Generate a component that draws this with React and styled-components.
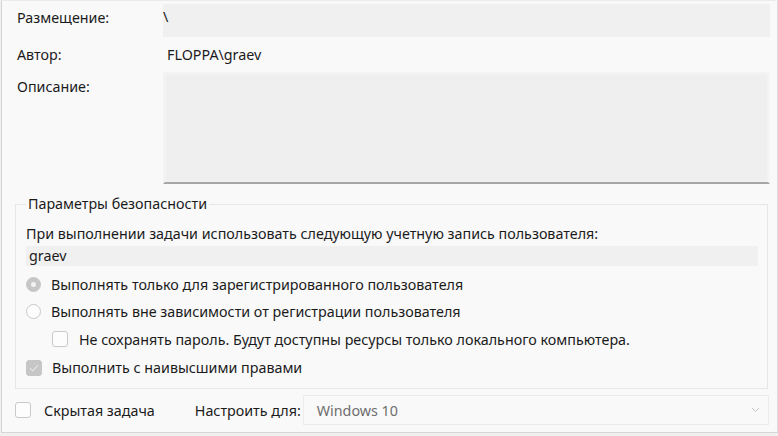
import React from 'react';
import styled, { createGlobalStyle } from 'styled-components';

const GlobalStyle = createGlobalStyle`
  html, body {
    margin: 0;
    padding: 0;
    background: #f0f0f0;
  }
  body {
    font-family: "Noto Sans", "Open Sans", sans-serif;
    font-size: 14.3px;
    color: #1b1b1b;
  }
`;

const Frame = styled.div`
  box-sizing: border-box;
  width: 777px;
  height: 433px;
  margin-left: 1px;
  background: #f9f9f9;
  border-left: 1px solid #d4d4d4;
  border-right: 1px solid #dcdcdc;
  border-bottom: 1px solid #d6d6d6;
  border-top: 1px solid #ececec;
  display: flex;
  flex-direction: column;
`;

const InfoGrid = styled.div`
  display: grid;
  grid-template-columns: 146px 1fr;
  padding: 3px 7px 0 15px;
`;

const Label = styled.div`
  height: ${(p) => p.$h}px;
  padding-top: ${(p) => p.$pt || 0}px;
  box-sizing: border-box;
  display: flex;
  align-items: ${(p) => (p.$center ? 'center' : 'flex-start')};
  white-space: nowrap;
`;

const ReadField = styled.div`
  box-sizing: border-box;
  height: ${(p) => p.$h}px;
  background: #f0f0f0;
  padding: 4px 0 0 0;
  line-height: 18px;
`;

const PlainValue = styled.div`
  height: 35px;
  display: flex;
  align-items: center;
  padding-left: 4px;
`;

const TextArea = styled.div`
  box-sizing: border-box;
  height: 112px;
  background: #efefef;
  border: 2px solid #f3f3f3;
  border-bottom: 2px solid #a6a6a6;
  border-right: 2px solid #f5f5f5;
  box-shadow: inset 0 0 0 1px #f2f2f2;
`;

const Group = styled.fieldset`
  margin: 11px 9px 0 13px;
  padding: 0 9px 0 10px;
  border: 1px solid #e6e6e6;
  height: 194px;
  box-sizing: border-box;
  min-width: 0;
`;

const Legend = styled.legend`
  padding: 0 2px;
  margin-left: 0;
  line-height: 18px;
`;

const Prompt = styled.div`
  height: 24px;
  margin-top: 8px;
  display: flex;
  align-items: center;
  white-space: nowrap;
`;

const AccountField = styled.div`
  height: 20px;
  margin-top: 1px;
  background: #f0f0f0;
  line-height: 19px;
  padding-left: 3px;
`;

const OptionRow = styled.div`
  display: flex;
  align-items: center;
  height: ${(p) => p.$h || 27}px;
  margin-top: ${(p) => p.$mt || 0}px;
  padding-left: ${(p) => p.$indent || 0}px;
  gap: ${(p) => p.$gap || 10}px;
  white-space: nowrap;
`;

const Radio = styled.span`
  box-sizing: border-box;
  width: 15px;
  height: 15px;
  border-radius: 50%;
  flex: none;
  border: 1px solid #c8c8c8;
  background: ${(p) => (p.$checked ? '#c6c6c6' : '#fdfdfd')};
  display: flex;
  align-items: center;
  justify-content: center;
  &::after {
    content: '';
    display: ${(p) => (p.$checked ? 'block' : 'none')};
    width: 5px;
    height: 5px;
    border-radius: 50%;
    background: #f2f2f2;
  }
`;

const Box = styled.span`
  box-sizing: border-box;
  width: 16px;
  height: 16px;
  border-radius: 3px;
  flex: none;
  border: 1px solid ${(p) => (p.$checked ? '#c6c6c6' : '#c9c9c9')};
  background: ${(p) => (p.$checked ? '#c6c6c6' : '#fdfdfd')};
  display: flex;
  align-items: center;
  justify-content: center;
`;

const Footer = styled.div`
  display: flex;
  align-items: center;
  padding: 6px 8px 0 13px;
  height: 30px;
`;

const FooterLabel = styled.span`
  margin-left: ${(p) => p.$ml}px;
  white-space: nowrap;
`;

const Select = styled.div`
  flex: 1;
  box-sizing: border-box;
  height: 30px;
  margin-left: ${(p) => p.$ml}px;
  border: 1px solid #ececec;
  background: #f9f9f9;
  display: flex;
  align-items: center;
  justify-content: space-between;
  padding: 0 8px 0 13px;
  color: #6e6e6e;
`;

const Check = () => (
  <svg width="10" height="8" viewBox="0 0 10 8">
    <path d="M1 4.2 L3.8 7 L9 1.2" fill="none" stroke="#e4e4e4" strokeWidth="1.2" />
  </svg>
);

const Chevron = () => (
  <svg width="9" height="6" viewBox="0 0 9 6">
    <path d="M1 1 L4.5 4.5 L8 1" fill="none" stroke="#c4c4c4" strokeWidth="1" />
  </svg>
);

export default function App() {
  return (
    <>
      <GlobalStyle />
      <Frame>
        <InfoGrid>
          <Label $h={33} $pt={4}>Размещение:</Label>
          <ReadField $h={33}>\</ReadField>
          <Label $h={35} $center>Автор:</Label>
          <PlainValue>FLOPPA\graev</PlainValue>
          <Label $h={112} $pt={5}>Описание:</Label>
          <TextArea />
        </InfoGrid>

        <Group>
          <Legend>Параметры безопасности</Legend>
          <Prompt>При выполнении задачи использовать следующую учетную запись пользователя:</Prompt>
          <AccountField>graev</AccountField>
          <OptionRow $h={28} $mt={4}>
            <Radio $checked />
            Выполнять только для зарегистрированного пользователя
          </OptionRow>
          <OptionRow $h={27}>
            <Radio />
            Выполнять вне зависимости от регистрации пользователя
          </OptionRow>
          <OptionRow $h={28} $indent={26} $gap={11}>
            <Box />
            Не сохранять пароль. Будут доступны ресурсы только локального компьютера.
          </OptionRow>
          <OptionRow $h={29}>
            <Box $checked>
              <Check />
            </Box>
            Выполнить с наивысшими правами
          </OptionRow>
        </Group>

        <Footer>
          <Box />
          <FooterLabel $ml={13}>Скрытая задача</FooterLabel>
          <FooterLabel $ml={40}>Настроить для:</FooterLabel>
          <Select $ml={2}>
            Windows 10
            <Chevron />
          </Select>
        </Footer>
      </Frame>
    </>
  );
}
